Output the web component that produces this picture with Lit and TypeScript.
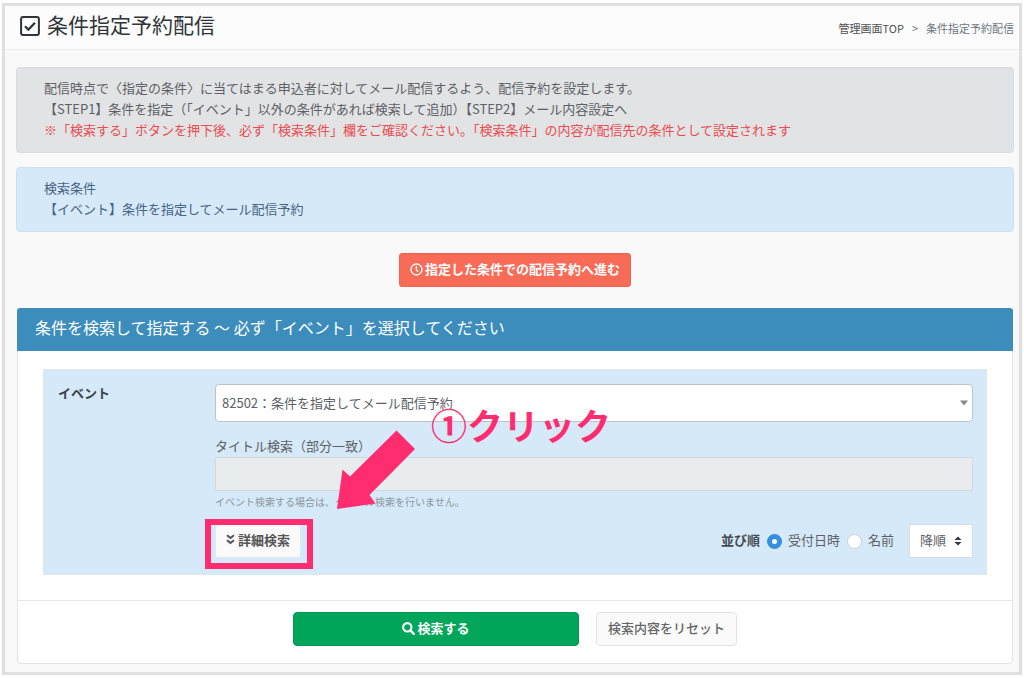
import { LitElement, html, css, svg } from "lit";
import { customElement, state } from "lit/decorators.js";

const checkIcon = html`<svg class="title-icon" viewBox="0 0 20 20" aria-hidden="true">
  <rect x="1.1" y="1.1" width="17.8" height="17.8" rx="2" fill="none" stroke="currentColor" stroke-width="2"/>
  <path d="M5 10.2 8.4 13.6 15 6.8" fill="none" stroke="currentColor" stroke-width="2.2"/>
</svg>`;

const clockIcon = html`<svg class="icon" viewBox="0 0 14 14" aria-hidden="true">
  <circle cx="7" cy="7" r="5.9" fill="none" stroke="currentColor" stroke-width="1.5"/>
  <path d="M6.8 3.2V7.2L9 9.6" fill="none" stroke="currentColor" stroke-width="1.4"/>
</svg>`;

const searchIcon = html`<svg class="icon" viewBox="0 0 14 14" aria-hidden="true">
  <circle cx="5.7" cy="5.7" r="4.5" fill="none" stroke="currentColor" stroke-width="2.2"/>
  <path d="M9 9 12.7 12.7" stroke="currentColor" stroke-width="2.6" stroke-linecap="round"/>
</svg>`;

const chevrons = html`<svg class="chevrons" viewBox="0 0 9 11" aria-hidden="true">
  ${svg`<path d="M1 1.2 4.5 4 8 1.2M1 6.2 4.5 9 8 6.2" fill="none" stroke="currentColor" stroke-width="2"/>`}
</svg>`;

@customElement("app-root")
export class AppRoot extends LitElement {
  @state() private sortKey = "date";

  static styles = css`
    :host {
      display: block;
      padding: 3px 2px;
      background: #fff;
      font-family: "Noto Sans CJK JP", "Noto Sans", sans-serif;
      font-size: 13px;
      line-height: 21px;
      color: #5c6166;
    }
    * { box-sizing: border-box; }
    button, input, select { font: inherit; color: inherit; margin: 0; }
    button { cursor: pointer; }
    .frame { border: 3px solid #dfdfdf; background: #f9f9f9; }
    .top {
      display: flex;
      align-items: center;
      justify-content: space-between;
      height: 44px;
      padding: 0 5px 0 15px;
      background: #fcfcfc;
      border-bottom: 1px solid #ececec;
    }
    h1 {
      display: flex;
      align-items: center;
      gap: 7px;
      margin: 0;
      padding-bottom: 4px;
      font-size: 21px;
      line-height: 28px;
      font-weight: 400;
      color: #2f3438;
    }
    h1 span { padding-bottom: 4px; }
    .title-icon { width: 20px; height: 20px; }
    .crumbs { display: flex; gap: 8px; font-size: 11px; padding-top: 2px; color: #6c757d; }
    .crumbs a { color: #505050; text-decoration: none; }
    .content { padding: 17px 5px 8px 11px; }
    .alert { margin: 0 0 14px; padding: 9px 27px 12px; border: 1px solid #d9dbdd; border-radius: 4px; }
    .alert p { margin: 0; }
    .guide { background: #e2e3e5; }
    .warn { color: #ea4b4f; }
    .terms { background: #d6e9f8; border-color: #c8e0f3; color: #456484; }
    .go { display: flex; justify-content: center; margin: 21px 0; }
    .btn {
      display: inline-flex;
      align-items: center;
      justify-content: center;
      gap: 2px;
      height: 34px;
      padding: 0 10px 4px;
      border: 1px solid transparent;
      border-radius: 3px;
      font-weight: 500;
    }
    .icon { width: 13px; height: 13px; margin-top: 2px; }
    .proceed { background: #f86b56; border-color: #ed6450; color: #fff; font-weight: 700; }
    .box { margin: 0 1px; background: #fff; border: 1px solid #e1e4e6; border-radius: 4px; }
    .box h2 {
      margin: -1px -1px 0;
      padding: 7px 18px 12px;
      border-radius: 3px 3px 0 0;
      background: #3c8dbc;
      color: #fff;
      font-size: 16px;
      line-height: 24px;
      font-weight: 400;
    }
    .main { padding: 18px 25px 25px; }
    .panel {
      display: grid;
      grid-template-columns: 157px minmax(0, 1fr);
      padding: 14px 13px 16px 14px;
      border: 1px solid #dfe7ec;
      background: #d6e9f8;
    }
    .name { font-weight: 700; color: #3c4248; line-height: 18px; }
    .pick, .order { display: grid; align-items: center; }
    .pick select, .pick svg, .order select, .order svg { grid-area: 1 / 1; }
    .pick svg, .order svg { justify-self: end; pointer-events: none; }
    .pick select {
      appearance: none;
      width: 100%;
      height: 38px;
      padding: 0 24px 2px 6px;
      border: 1px solid #bfc3c6;
      border-radius: 4px;
      background: #fff;
    }
    .pick svg { width: 8px; height: 6px; margin-right: 5px; }
    .sub { display: block; margin-top: 13px; padding-bottom: 1px; }
    .title-input {
      display: block;
      width: 100%;
      height: 34px;
      border: 1px solid #d3d9de;
      background: #e8ecef;
      padding: 0 8px;
    }
    .hint { margin: 3px 0 14px; font-size: 10px; line-height: 16px; color: #8b969f; }
    .row { display: flex; align-items: center; justify-content: space-between; height: 34px; }
    .detail { position: relative; }
    .more { background: #fafafa; border-color: #e6e9eb; color: #555; padding-bottom: 3px; font-weight: 700; }
    .more { gap: 3px; }
    .chevrons { width: 9px; height: 11px; }
    .sort { display: flex; align-items: center; }
    .sort b { color: #454b50; margin-right: 7px; padding-bottom: 4px; }
    .sort label { margin: 0 7px 0 6px; padding-bottom: 4px; }
    .sort input {
      appearance: none;
      width: 15px;
      height: 15px;
      border: 1px solid #c6d0d8;
      border-radius: 50%;
      background: #fff;
    }
    .sort input:checked { border: 5px solid #3490dc; }
    .order { margin-left: 8px; }
    .order select {
      appearance: none;
      width: 64px;
      height: 34px;
      padding: 0 10px 4px;
      border: 1px solid #d5dde3;
      border-radius: 0;
      background: #fff;
    }
    .order svg { width: 8px; height: 10px; margin-right: 11px; color: #343a40; }
    .foot {
      display: flex;
      justify-content: center;
      gap: 17px;
      padding: 11px 20px 17px;
      border-top: 1px solid #e6e6e6;
    }
    .search { width: 30%; background: #02a65a; border-color: #07954f; color: #fff; border-radius: 4px; font-weight: 700; }
    .reset { background: #fafafa; border-color: #e3e3e3; color: #666; border-radius: 4px; padding: 0 11px 4px; }
    .mark {
      position: absolute;
      left: -10px;
      top: -5px;
      width: 108px;
      height: 50px;
      border: 6px solid #ff2d6f;
      pointer-events: none;
    }
    .arrow { position: absolute; left: 121px; top: -94px; width: 80px; height: 80px; pointer-events: none; }
    .note {
      position: absolute;
      left: 216px;
      top: -121px;
      font-size: 36px;
      line-height: 42px;
      font-weight: 700;
      color: #ff2d6f;
      white-space: nowrap;
      pointer-events: none;
    }
  `;

  render() {
    return html`
      <div class="frame">
        <header class="top">
          <h1>${checkIcon}<span>条件指定予約配信</span></h1>
          <nav class="crumbs"><a href="#">管理画面TOP</a><span>&gt;</span><span>条件指定予約配信</span></nav>
        </header>
        <main class="content">
          <div class="alert guide">
            <p>配信時点で〈指定の条件〉に当てはまる申込者に対してメール配信するよう、配信予約を設定します。</p>
            <p>【STEP1】条件を指定（「イベント」以外の条件があれば検索して追加）【STEP2】メール内容設定へ</p>
            <p class="warn">※「検索する」ボタンを押下後、必ず「検索条件」欄をご確認ください。「検索条件」の内容が配信先の条件として設定されます</p>
          </div>
          <div class="alert terms">
            <p>検索条件</p>
            <p>【イベント】条件を指定してメール配信予約</p>
          </div>
          <div class="go">
            <button class="btn proceed" type="button">${clockIcon}<span>指定した条件での配信予約へ進む</span></button>
          </div>
          <form class="box" @submit=${(e: Event) => e.preventDefault()}>
            <h2>条件を検索して指定する ～ 必ず「イベント」を選択してください</h2>
            <div class="main">
              <div class="panel">
                <label class="name" for="event">イベント</label>
                <div>
                  <div class="pick">
                    <select id="event"><option>82502：条件を指定してメール配信予約</option></select>
                    <svg viewBox="0 0 8 6" aria-hidden="true"><path d="M0 .5H8L4 5.5Z" fill="#888"/></svg>
                  </div>
                  <label class="sub" for="title">タイトル検索（部分一致）</label>
                  <input class="title-input" id="title" type="text" disabled>
                  <p class="hint">イベント検索する場合は、タイトル検索を行いません。</p>
                  <div class="row">
                    <div class="detail">
                      <button class="btn more" type="button">${chevrons}<span>詳細検索</span></button>
                      <span class="mark"></span>
                      <svg class="arrow" viewBox="0 0 80 80" aria-hidden="true">
                        <path d="M60.5 0.5 79 19 33.5 65 39.5 73.5 1 79 6.500 39.500 14 46.500Z" fill="#ff2d6f"/>
                      </svg>
                      <span class="note">①クリック</span>
                    </div>
                    <div class="sort" role="group" aria-labelledby="sort-name">
                      <b id="sort-name">並び順</b>
                      <input type="radio" name="sort" id="by-date" .checked=${this.sortKey === "date"} @change=${() => (this.sortKey = "date")}>
                      <label for="by-date">受付日時</label>
                      <input type="radio" name="sort" id="by-name" .checked=${this.sortKey === "name"} @change=${() => (this.sortKey = "name")}>
                      <label for="by-name">名前</label>
                      <div class="order">
                        <select aria-label="並び順の方向"><option>降順</option><option>昇順</option></select>
                        <svg viewBox="0 0 8 10" aria-hidden="true"><path d="M.5 4H7.500L4 .5ZM.5 6H7.500L4 9.500Z" fill="currentColor"/></svg>
                      </div>
                    </div>
                  </div>
                </div>
              </div>
            </div>
            <div class="foot">
              <button class="btn search" type="submit">${searchIcon}<span>検索する</span></button>
              <button class="btn reset" type="reset">検索内容をリセット</button>
            </div>
          </form>
        </main>
      </div>
    `;
  }
}
